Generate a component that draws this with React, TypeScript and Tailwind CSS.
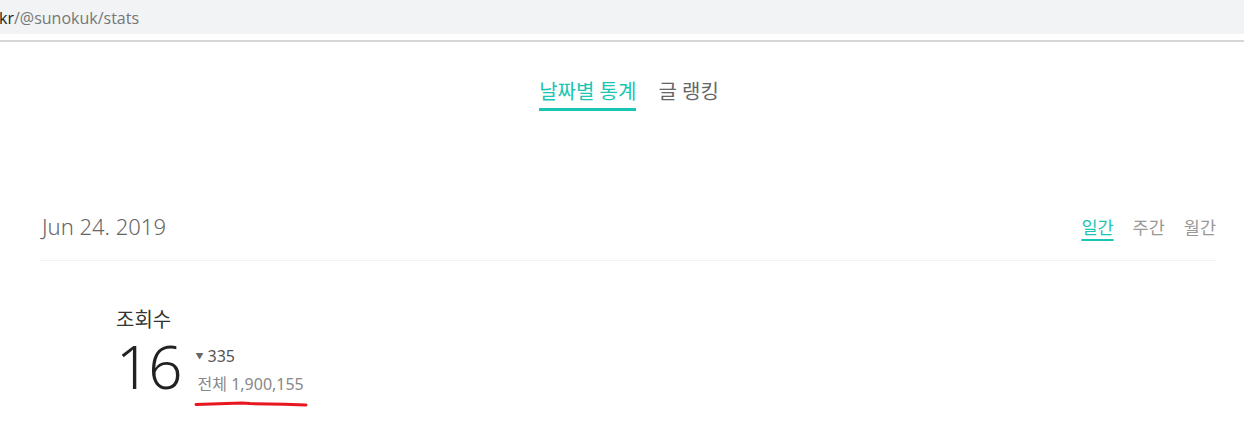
import React from "react";

const font = '"Noto Sans", "Noto Sans CJK KR", sans-serif';

const App = () => {
  return (
    <div className="w-[1244px] h-[431px] bg-white overflow-hidden" style={{ fontFamily: font }}>
      {/* address bar strip */}
      <div className="h-[34px] bg-[#f1f3f4] flex items-center">
        <span className="text-[16px] leading-none text-[#222] -ml-[1px] mt-[2px]" style={{ fontFamily: '"Open Sans", sans-serif' }}>
          kr<span className="text-[#777]">/@sunokuk/stats</span>
        </span>
      </div>
      <div className="h-[6px] bg-white" />
      <div className="h-[2px] bg-[#d6d6d6]" />

      {/* tabs */}
      <div className="flex justify-center gap-[22px] mt-[36px] ml-[14px]">
        <div className="flex flex-col items-center">
          <span className="text-[20px] leading-[28px] text-[#1bc5b4]">날짜별 통계</span>
          <div className="h-[3px] w-full bg-[#1bc5b4] mt-[2px]" />
        </div>
        <span className="text-[20px] leading-[28px] text-[#666]">글 랭킹</span>
      </div>

      <div className="ml-[40px] w-[1176px] mt-[100px]">
        <div className="flex items-end justify-between pb-[19px] border-b border-[#f2f2f2]">
          <span className="text-[22px] leading-[30px] font-light text-[#666] ml-[2px]">Jun 24. 2019</span>
          <div className="flex gap-[19px] text-[17.5px] leading-[24px] mb-[2px]">
            <span className="text-[#1bc5b4] underline underline-offset-[5px] decoration-2">일간</span>
            <span className="text-[#999]">주간</span>
            <span className="text-[#999]">월간</span>
          </div>
        </div>

        <div className="ml-[76px] mt-[45px]">
          <div className="text-[20px] leading-[28px] text-[#333]">조회수</div>
          <div className="flex items-start mt-[2px]">
            <span className="text-[60px] leading-[60px] font-light text-[#222] tracking-[-2px]">16</span>
            <div className="ml-[15px] mt-[9px] flex flex-col">
              <span className="text-[16px] leading-[22px] text-[#555]">
                <span className="text-[8px] align-[3px] mr-[4px] text-[#666]">▼</span>335
              </span>
              <span className="text-[16px] leading-[22px] text-[#888] mt-[6px] ml-[2px]">전체 1,900,155</span>
              <svg width="118" height="10" viewBox="0 0 118 10" className="-ml-[2px] mt-[4px]">
                <path
                  d="M2 5.5 L 48 4 L 56 4.6 L 90 5.2 L 112 6"
                  stroke="#e8161e"
                  strokeWidth="3"
                  fill="none"
                  strokeLinecap="round"
                  strokeLinejoin="round"
                />
              </svg>
            </div>
          </div>
        </div>
      </div>
    </div>
  );
};

export default App;
